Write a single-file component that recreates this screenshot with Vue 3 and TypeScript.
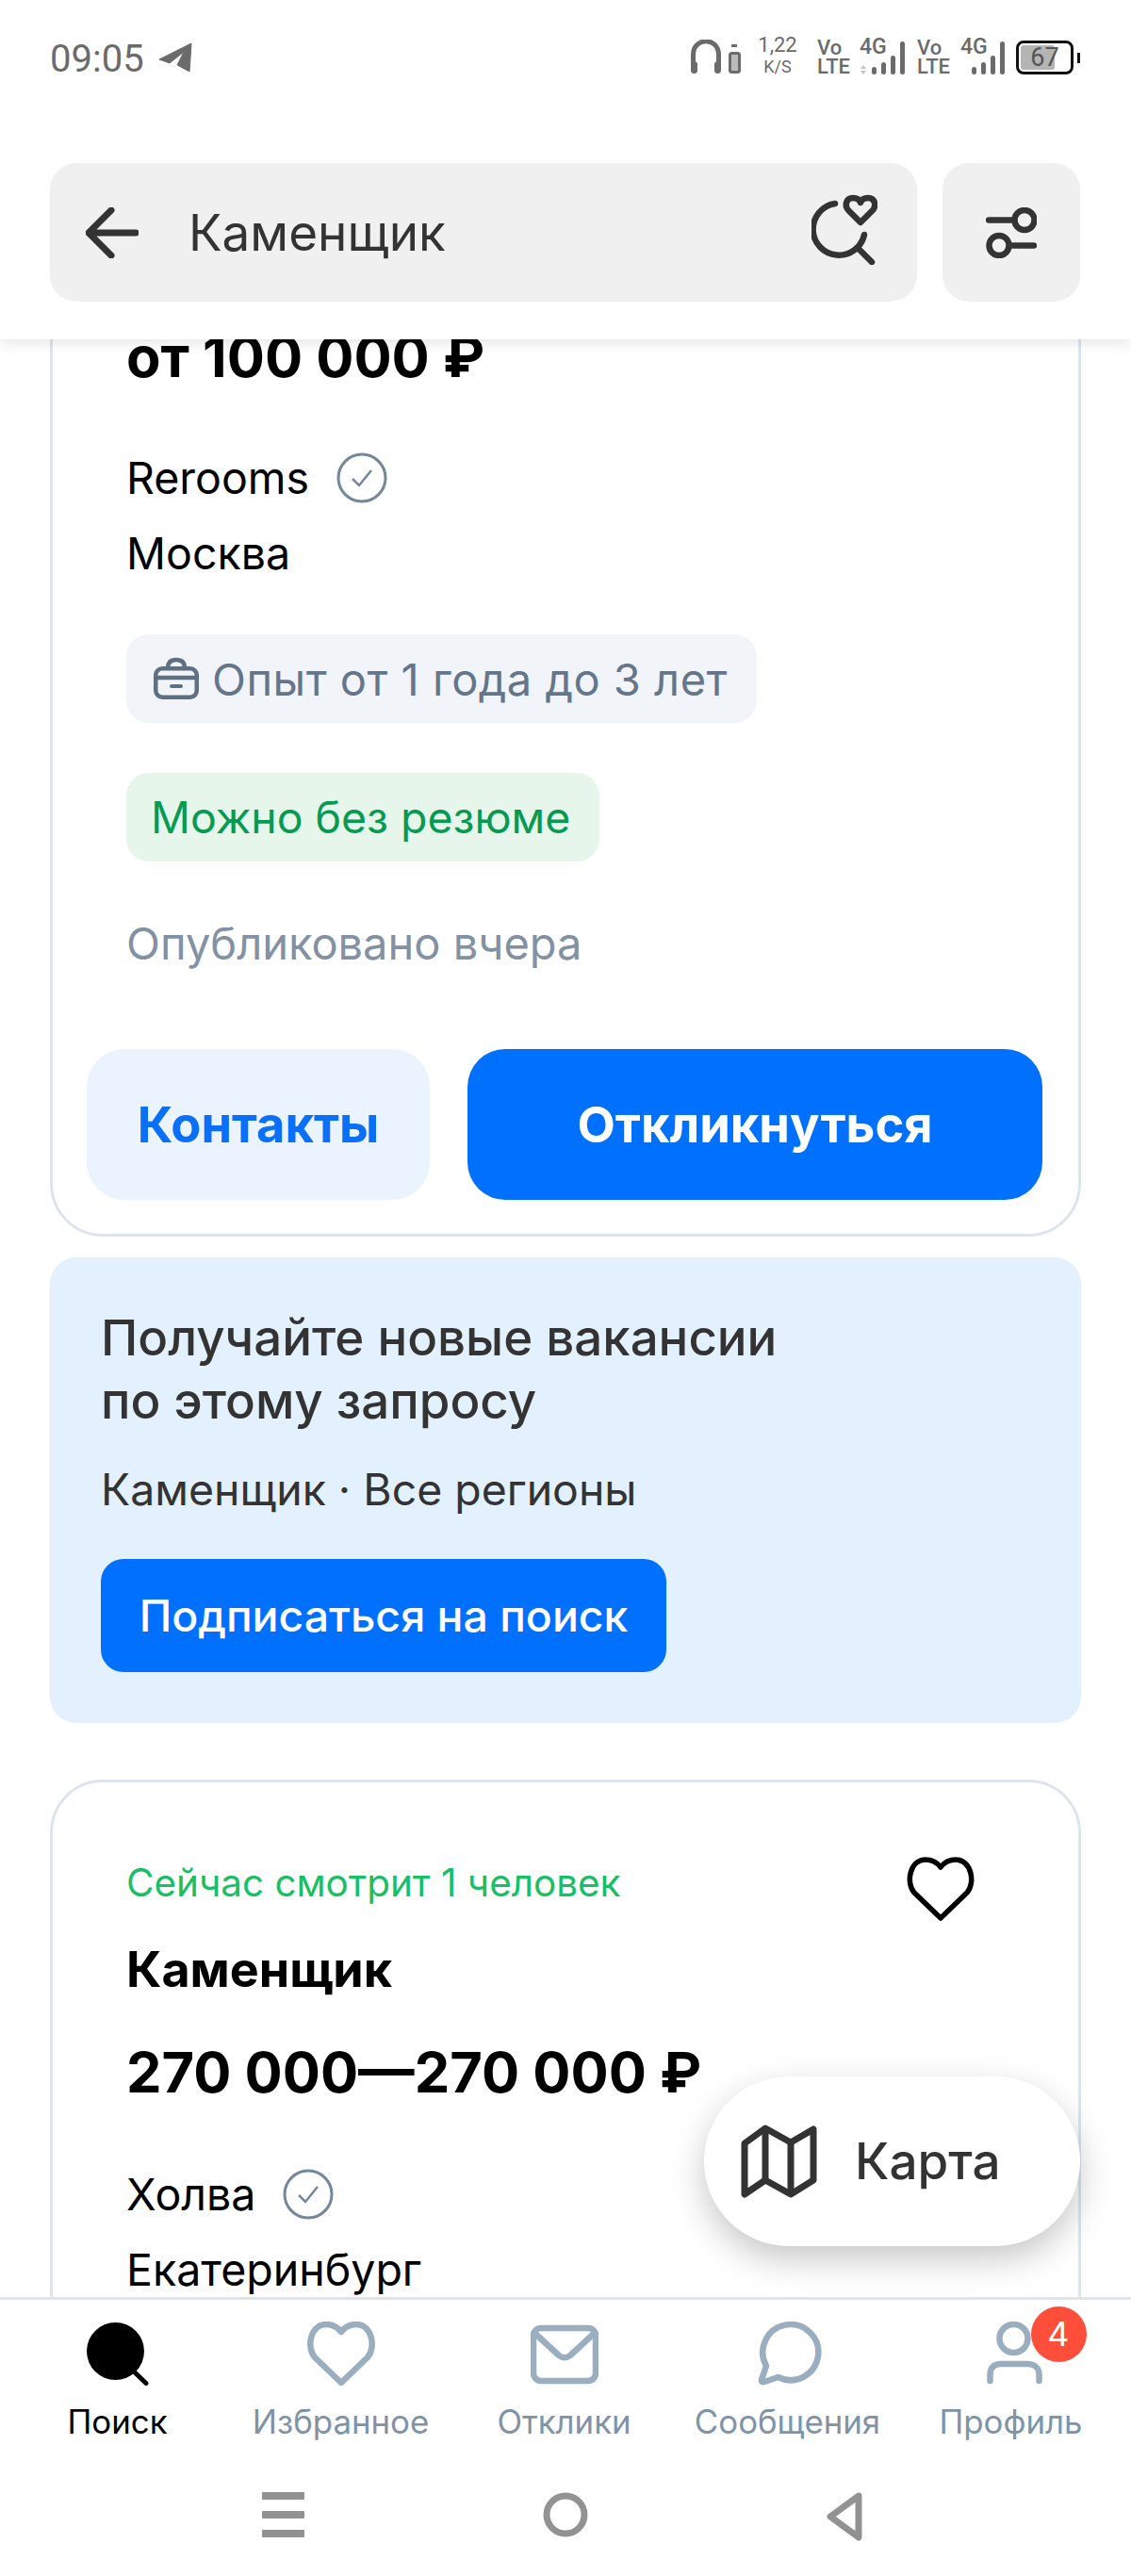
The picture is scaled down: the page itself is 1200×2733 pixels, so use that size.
<template>
  <div class="screen">
    <header class="top">
      <div class="status">
        <div class="status-left">
          <span class="time">09:05</span>
          <svg width="36" height="30" viewBox="0 0 36 30"><path d="M35 0 L1 17 L12 21 L27 9 L20 23 L33 30 Z" fill="#6b6b6b" stroke="#6b6b6b" stroke-linejoin="round" /></svg>
        </div>
        <div class="status-right">
          <svg width="56" height="38" viewBox="0 0 56 38" class="ic-phones">
            <path d="M3.5 32 V16 C3.5 -3 30.5 -3 30.5 16 V32" fill="none" stroke="#6b6b6b" stroke-width="5" />
            <rect x="1" y="23" width="7" height="13" rx="3.5" fill="#6b6b6b" />
            <rect x="26" y="23" width="7" height="13" rx="3.5" fill="#6b6b6b" />
            <rect x="44" y="5" width="6" height="3" fill="#6b6b6b" />
            <rect x="42.5" y="14.5" width="10" height="20" rx="2" fill="#bbb" stroke="#6b6b6b" stroke-width="3" />
          </svg>
          <div class="speed"><span>1,22</span><small>K/S</small></div>
          <div class="volte first-sim"><span>Vo</span><span>LTE</span></div>
          <div class="signal">
            <span class="g4">4G</span>
            <svg width="50" height="38" viewBox="0 0 50 38">
              <path d="M2 31 L5 27 L8 31 Z M2 33 L5 37 L8 33 Z" fill="#c4c4c4" />
              <rect x="14" y="29" width="5" height="8" rx="2.5" fill="#6b6b6b" />
              <rect x="24" y="24" width="5" height="13" rx="2.5" fill="#6b6b6b" />
              <rect x="34" y="17" width="5" height="20" rx="2.5" fill="#6b6b6b" />
              <rect x="44" y="2" width="5" height="35" rx="2.5" fill="#6b6b6b" />
            </svg>
          </div>
          <div class="volte"><span>Vo</span><span>LTE</span></div>
          <div class="signal plain">
            <span class="g4">4G</span>
            <svg width="37" height="38" viewBox="0 0 37 38">
              <rect x="1" y="29" width="5" height="8" rx="2.5" fill="#6b6b6b" />
              <rect x="11" y="24" width="5" height="13" rx="2.5" fill="#6b6b6b" />
              <rect x="21" y="17" width="5" height="20" rx="2.5" fill="#6b6b6b" />
              <rect x="31" y="2" width="5" height="35" rx="2.5" fill="#6b6b6b" />
            </svg>
          </div>
          <div class="battery">
            <div class="battery-body"><i class="battery-fill"></i><span>67</span></div>
            <i class="battery-tip"></i>
          </div>
        </div>
      </div>
      <div class="search-row">
        <div class="search">
          <svg width="56" height="54" viewBox="0 0 56 54" fill="none" stroke="#333" stroke-width="7" stroke-linecap="round" stroke-linejoin="round"><path d="M53 27 H4 M27 3 L3 27 L27 51" /></svg>
          <span class="search-text">Каменщик</span>
          <svg width="70" height="76" viewBox="0 0 70 76" fill="none" stroke="#333" stroke-width="6.5" stroke-linecap="round" stroke-linejoin="round" class="search-heart">
            <path d="M25 11 A27.5 27.5 0 1 0 56 44 M50 59 L64 73" />
            <path d="M52 31 L40 19 C34 13 37 5 44 5 C48 5 51 7 52 10 C53 7 56 5 60 5 C67 5 70 13 64 19 Z" />
          </svg>
        </div>
        <div class="filter">
          <svg width="54" height="54" viewBox="0 0 54 54" fill="none" stroke="#333" stroke-width="6.5" stroke-linecap="round"><circle cx="41" cy="13.5" r="10.5" /><path d="M3 13.5 H30" /><circle cx="14" cy="40.5" r="10.5" /><path d="M25 40.5 H51" /></svg>
        </div>
      </div>
    </header>

    <main class="feed">
      <section class="card first">
        <div class="price">от 100 000 ₽</div>
        <div class="company">Rerooms
          <svg width="54" height="54" viewBox="0 0 54 54" fill="none" stroke="#74879c" stroke-width="3"><circle cx="27" cy="27" r="25" /><path d="M17 28 L24 35 L37 19" stroke-width="2.5" /></svg>
        </div>
        <div class="city">Москва</div>
        <div class="chip chip-gray">
          <svg width="50" height="46" viewBox="0 0 50 46" fill="none" stroke="#5f7083" stroke-width="4.5" stroke-linecap="round" stroke-linejoin="round"><rect x="3.25" y="12.25" width="43.5" height="30.5" rx="7" /><path d="M16 12 C16 5 20 3 25 3 C30 3 34 5 34 12 M3 22 H47" /><path d="M20 31 H30" stroke-width="4" /></svg>
          Опыт от 1 года до 3 лет
        </div>
        <div class="chip chip-green">Можно без резюме</div>
        <div class="published">Опубликовано вчера</div>
        <div class="actions">
          <button class="btn-contacts">Контакты</button>
          <button class="btn-reply">Откликнуться</button>
        </div>
      </section>

      <section class="subscribe">
        <div class="sub-title">Получайте новые вакансии<br />по этому запросу</div>
        <div class="sub-query">Каменщик · Все регионы</div>
        <button class="btn-sub">Подписаться на поиск</button>
      </section>

      <section class="card second">
        <div class="watch-row">
          <span class="watching">Сейчас смотрит 1 человек</span>
          <svg width="76" height="68" viewBox="0 0 72 68" fill="none" stroke="#000" stroke-width="5.5" stroke-linejoin="round"><path d="M36 65 L8 38 C-1 28 3 3 20 3 C28 3 33 7 36 11 C39 7 44 3 52 3 C69 3 73 28 64 38 Z" /></svg>
        </div>
        <h2 class="job">Каменщик</h2>
        <div class="price price-second">270 000—270 000 ₽</div>
        <div class="company company-second">Холва
          <svg width="54" height="54" viewBox="0 0 54 54" fill="none" stroke="#74879c" stroke-width="3"><circle cx="27" cy="27" r="25" /><path d="M17 28 L24 35 L37 19" stroke-width="2.5" /></svg>
        </div>
        <div class="city">Екатеринбург</div>
      </section>

      <button class="map-btn">
        <svg width="84" height="80" viewBox="0 0 84 80" fill="none" stroke="#333" stroke-width="7" stroke-linejoin="round"><path d="M5 21 L27 5 L54 20 L78 6 V60 L54 75 L27 60 L5 75 Z" /><path d="M27 5 V60 M54 20 V75" /></svg>
        <span>Карта</span>
      </button>
    </main>

    <nav class="tabs">
      <div v-for="tab in tabs" :key="tab.label" class="tab" :class="{ active: tab.active }">
        <div class="tab-icon">
          <svg width="72" height="68" viewBox="0 0 72 68" fill="none" :stroke="tab.active ? '#000' : '#9aaec0'" stroke-width="6.5" stroke-linejoin="round" stroke-linecap="round" v-html="tab.icon"></svg>
          <span v-if="tab.badge" class="badge">{{ tab.badge }}</span>
        </div>
        <span class="tab-label">{{ tab.label }}</span>
      </div>
    </nav>

    <div class="android-nav">
      <svg width="46" height="48" viewBox="0 0 46 48" fill="#929292"><rect y="0" width="45" height="8" rx="1" /><rect y="20" width="45" height="8" rx="1" /><rect y="40" width="45" height="8" rx="1" /></svg>
      <svg width="48" height="48" viewBox="0 0 48 48" fill="none" stroke="#929292" stroke-width="7"><circle cx="24" cy="24" r="20" /></svg>
      <svg width="40" height="52" viewBox="0 0 40 52" fill="none" stroke="#929292" stroke-width="7" stroke-linejoin="round"><path d="M35 4 L5 26 L35 48 Z" /></svg>
    </div>
  </div>
</template>

<script setup lang="ts">
interface Tab {
  label: string
  icon: string
  active?: boolean
  badge?: number
}

const tabs: Tab[] = [
  {
    label: 'Поиск',
    active: true,
    icon: '<circle cx="33.5" cy="31.5" r="30.5" fill="#000" stroke="none"/><path d="M54 54 L66 65.5" stroke="#000" stroke-width="5"/>',
  },
  {
    label: 'Избранное',
    icon: '<path d="M36 65 L8 38 C-1 28 3 3 20 3 C28 3 33 7 36 11 C39 7 44 3 52 3 C69 3 73 28 64 38 Z"/>',
  },
  {
    label: 'Отклики',
    icon: '<rect x="3" y="7" width="66" height="56" rx="8"/><path d="M4 12 L30 36 C34 39 38 39 42 36 L68 12"/>',
  },
  {
    label: 'Сообщения',
    icon: '<path d="M25.5 59 A29.5 29.5 0 1 0 13 47 L8 62 Q7.5 65 11 64 Z"/>',
  },
  {
    label: 'Профиль',
    badge: 4,
    icon: '<circle cx="38.5" cy="18" r="15"/><path d="M13.5 63 V56 C13.5 49 18 45 25 45 H53 C60 45 65.5 49 65.5 56 V63"/>',
  },
]
</script>

<style>
html, body { margin: 0; background: #fff; }
</style>

<style scoped>
.screen {
  width: 1200px;
  height: 2733px;
  display: flex;
  flex-direction: column;
  overflow: hidden;
  background: #fff;
  font-family: Inter, "Noto Sans", sans-serif;
  color: #000;
}

.top {
  height: 360px;
  flex: none;
  box-sizing: border-box;
  position: relative;
  z-index: 2;
  background: #fff;
  box-shadow: 0 4px 14px rgba(0, 0, 0, 0.1);
  padding: 40px 54px 0 53px;
}
.status { display: flex; justify-content: space-between; height: 133px; }
.status-left { display: flex; align-items: flex-start; gap: 15px; padding-top: 6px; }
.time { font-family: Roboto, sans-serif; font-size: 40px; line-height: 34px; color: #6b6b6b; }
.status-right { display: flex; align-items: flex-start; color: #6b6b6b; font-family: Roboto, sans-serif; }
.ic-phones { margin: 2px 15px 0 0; }
.speed { display: flex; flex-direction: column; align-items: center; width: 44px; margin: -1px 20px 0 0; font-size: 22px; line-height: 18px; }
.speed small { font-size: 18px; line-height: 28px; }
.volte { display: flex; flex-direction: column; width: 34px; margin: 1px 11px 0 0; font-size: 22px; font-weight: 500; line-height: 20px; }
.volte.first-sim { margin-right: 10px; }
.signal { position: relative; width: 50px; height: 40px; margin: 2px 12px 0 0; }
.signal.plain { width: 37px; margin-left: 12px; margin-right: 11px; }
.g4 { position: absolute; left: 1px; top: -3px; font-size: 23px; font-weight: 500; line-height: 22px; }
.signal.plain .g4 { left: -11px; }
.battery { display: flex; align-items: center; gap: 4px; margin-top: 3px; }
.battery-body {
  width: 61px;
  height: 36px;
  box-sizing: border-box;
  border: 3px solid #111;
  border-radius: 8px;
  position: relative;
  display: flex;
  align-items: center;
  justify-content: center;
  font-size: 27px;
  color: #555;
}
.battery-fill { position: absolute; left: 2px; top: 2px; bottom: 2px; width: 36px; background: #b4b4b4; border-radius: 3px; }
.battery-body span { position: relative; }
.battery-tip { width: 3px; height: 11px; background: #111; }

.search-row { display: flex; gap: 27px; }
.search {
  flex: 1;
  height: 147px;
  background: #f0f0f0;
  border-radius: 28px;
  display: flex;
  align-items: center;
  padding: 0 42px 0 38px;
}
.search-text { flex: 1; font-size: 53px; color: #333; margin-left: 53px; }
.search-heart { margin-top: -8px; }
.filter {
  width: 146px;
  height: 147px;
  background: #f0f0f0;
  border-radius: 28px;
  display: flex;
  align-items: center;
  justify-content: center;
}

.feed { flex: 1; min-height: 0; position: relative; overflow: hidden; padding: 0 53px; }
.card {
  border: 3px solid #dde4ee;
  border-radius: 56px;
  box-sizing: border-box;
  padding: 0 36px;
}
.card.first { margin-top: -100px; padding-top: 81px; height: 1052px; }
.card.second { margin-top: 60px; height: 700px; padding-top: 79px; }
.price { font-size: 59.6px; font-weight: 700; line-height: 68px; padding-left: 42px; }
.company { display: flex; align-items: center; gap: 29px; font-size: 46.5px; line-height: 60px; margin-top: 65px; padding-left: 42px; }
.city { font-size: 46.5px; line-height: 60px; margin-top: 20px; padding-left: 42px; }
.chip {
  display: flex;
  align-items: center;
  width: fit-content;
  height: 94px;
  box-sizing: border-box;
  border-radius: 24px;
  padding: 0 28px;
  font-size: 47px;
  margin-left: 42px;
}
.chip-gray { margin-top: 56px; background: #f1f4f9; color: #65768a; gap: 13px; letter-spacing: 0.5px; padding-right: 31px; }
.chip-green { margin-top: 53px; background: #e7f6ea; color: #069a52; font-size: 46.4px; padding: 0 31px 0 26px; }
.published { font-size: 47px; line-height: 60px; color: #8291a3; margin-top: 57px; padding-left: 42px; }
.actions { display: flex; gap: 40px; margin-top: 82px; }
.actions button, .btn-sub, .map-btn { border: 0; font-family: inherit; }
.btn-contacts { width: 364px; height: 160px; border-radius: 40px; background: #eaf3fe; color: #0a6ffb; font-size: 52.4px; font-weight: 700; }
.btn-reply { width: 610px; height: 160px; border-radius: 40px; background: #0070ff; color: #fff; font-size: 52.4px; font-weight: 700; }

.subscribe {
  margin-top: 22px;
  height: 494px;
  box-sizing: border-box;
  background: #e3f0fe;
  border-radius: 28px;
  padding: 52px 54px 0;
}
.sub-title { font-size: 52.8px; font-weight: 500; line-height: 67px; color: #333; }
.sub-query { font-size: 46.4px; line-height: 60px; color: #333; margin-top: 30px; }
.btn-sub {
  display: block;
  margin-top: 44px;
  width: 600px;
  height: 120px;
  border-radius: 24px;
  background: #0070ff;
  color: #fff;
  font-size: 46.4px;
  font-weight: 500;
  padding: 0;
}

.watch-row { display: flex; align-items: flex-start; justify-content: space-between; padding: 0 72px 0 42px; }
.watching { font-size: 40.4px; line-height: 56px; color: #19bf67; }
.job { margin: 20px 0 0; font-size: 52px; font-weight: 700; line-height: 64px; padding-left: 42px; }
.price-second { margin-top: 42px; }
.company-second { margin-top: 66px; }

.map-btn {
  position: absolute;
  right: 54px;
  top: 1843px;
  width: 399px;
  height: 180px;
  border-radius: 90px;
  background: #fff;
  box-shadow: 0 14px 36px rgba(0, 0, 0, 0.22);
  display: flex;
  align-items: center;
  gap: 38px;
  padding: 0 0 0 38px;
  color: #333;
  font-size: 53px;
  font-weight: 500;
}

.tabs {
  flex: none;
  height: 174px;
  box-sizing: border-box;
  border-top: 3px solid #dde4ec;
  display: grid;
  grid-template-columns: repeat(5, 1fr);
  padding: 23px 9px 0 6px;
  position: relative;
  background: #fff;
}
.tab { display: flex; flex-direction: column; align-items: center; color: #7f93a8; }
.tab.active { color: #000; }
.tab-icon { position: relative; height: 68px; }
.tab-label { font-size: 34.8px; line-height: 44px; margin-top: 16px; white-space: nowrap; }
.badge {
  position: absolute;
  left: 57px;
  top: -16px;
  width: 59px;
  height: 59px;
  border-radius: 50%;
  background: #ff4f3b;
  color: #fff;
  font-size: 36px;
  line-height: 59px;
  text-align: center;
}

.android-nav {
  flex: none;
  height: 122px;
  box-sizing: border-box;
  display: flex;
  align-items: flex-start;
  justify-content: space-between;
  padding: 33px 284px 0 278px;
  background: #fff;
}
</style>
